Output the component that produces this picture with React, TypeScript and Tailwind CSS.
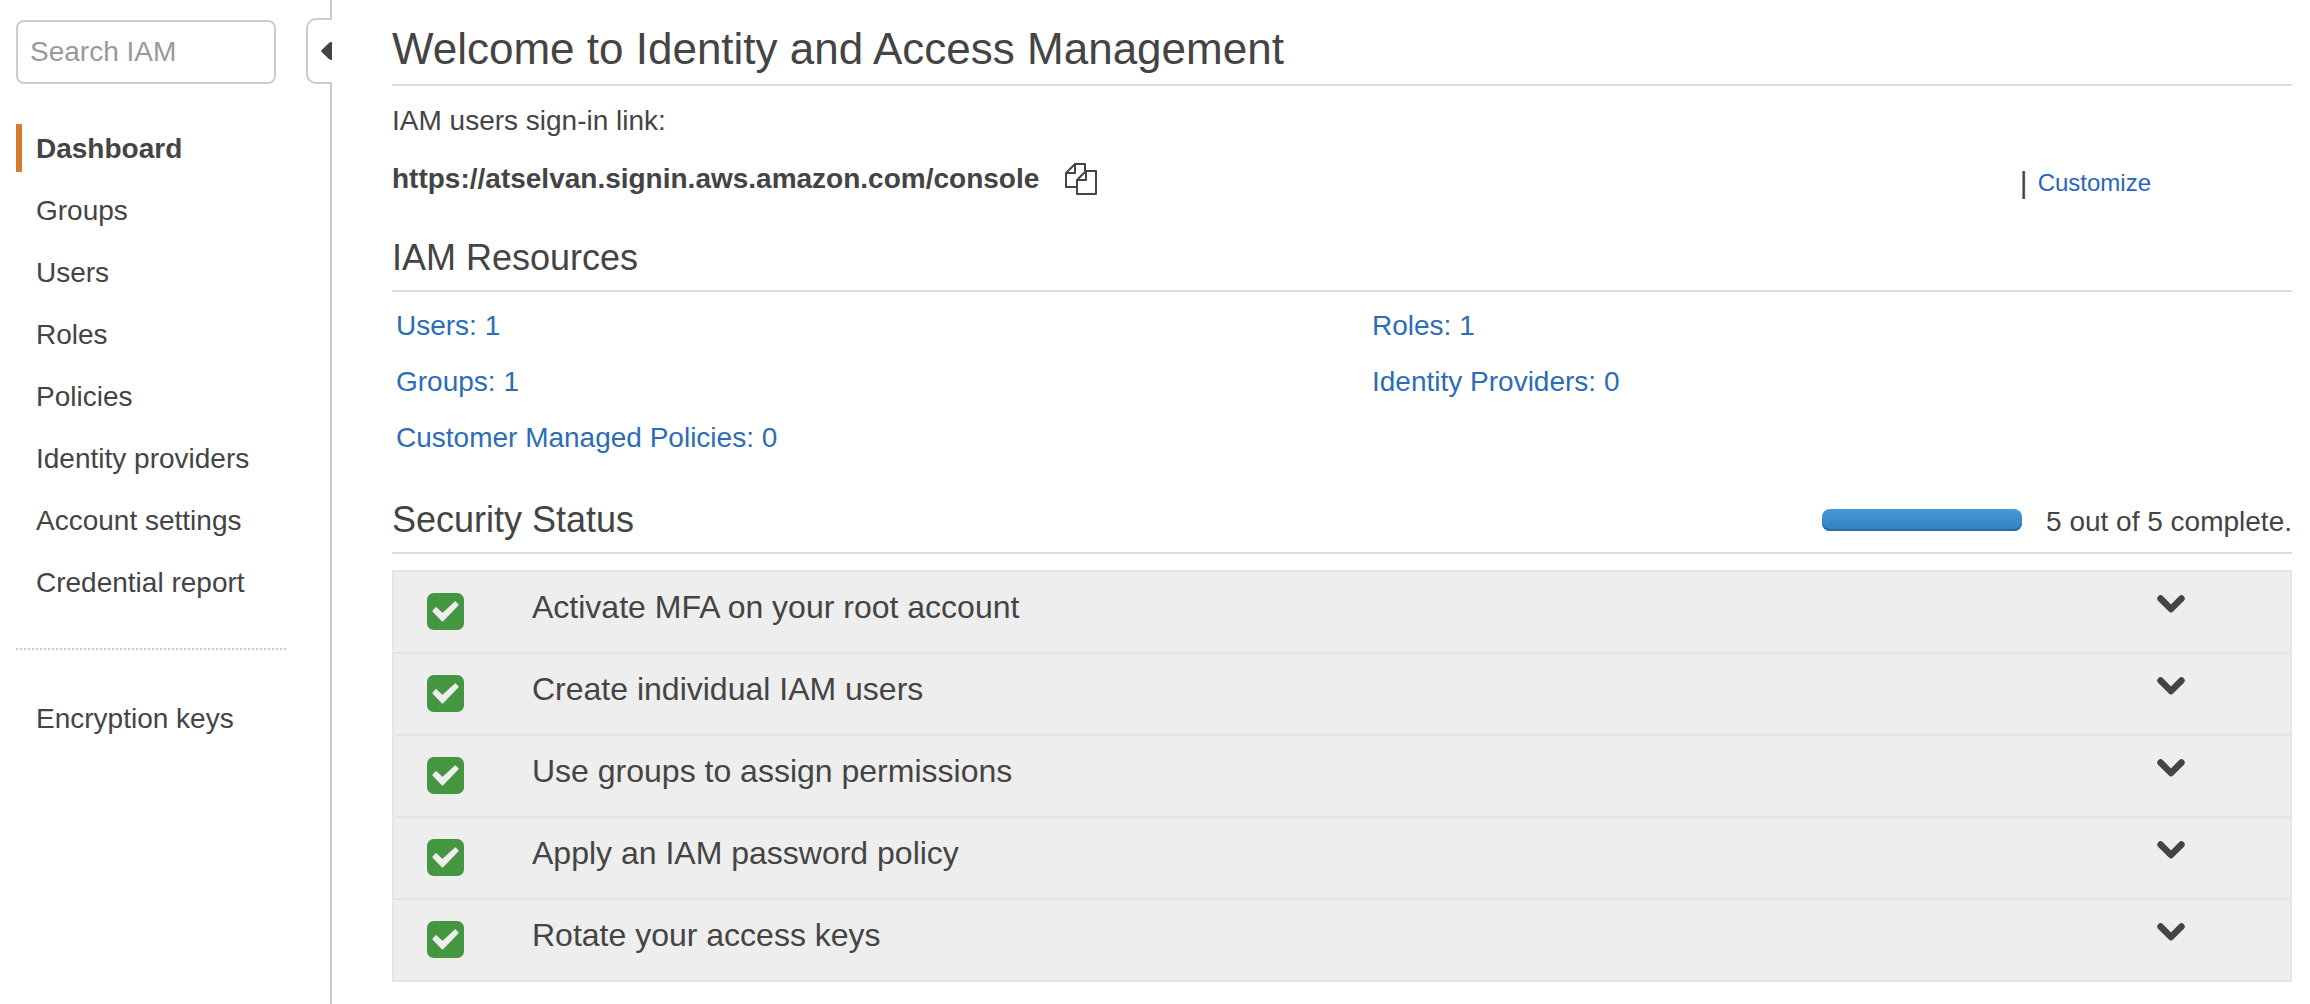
import React from "react";

const navItems = [
  "Dashboard",
  "Groups",
  "Users",
  "Roles",
  "Policies",
  "Identity providers",
  "Account settings",
  "Credential report",
];

const resources = ["Users: 1", "Roles: 1", "Groups: 1", "Identity Providers: 0", "Customer Managed Policies: 0"];

const checks = [
  "Activate MFA on your root account",
  "Create individual IAM users",
  "Use groups to assign permissions",
  "Apply an IAM password policy",
  "Rotate your access keys",
];

function CopyIcon() {
  return (
    <svg className="size-8" viewBox="0 0 32 32" fill="none" stroke="currentColor" strokeWidth="2" strokeLinejoin="round" aria-hidden="true">
      <path d="M12 24H1V10L10 1H20V8" />
      <path d="M1 10H10V1" />
      <path d="M12 17L21 8H31V31H12Z" />
      <path d="M12 17H21V8" />
    </svg>
  );
}

function CheckIcon() {
  return (
    <svg className="h-[37px] w-[37px] shrink-0" viewBox="0 0 110 110" aria-hidden="true">
      <rect width="110" height="110" rx="20" fill="#449641" />
      <path d="M19 54L27 45L46 63L84 28L91 35L46 82Z" fill="#eee" stroke="#eee" strokeWidth="6" strokeLinejoin="round" />
    </svg>
  );
}

function ChevronIcon() {
  return (
    <svg className="h-[18px] w-7" viewBox="0 0 28 18" fill="none" stroke="currentColor" strokeWidth="6.6" strokeLinecap="round" strokeLinejoin="round" aria-hidden="true">
      <path d="M3.6 3.6L14 14L24.4 3.6" />
    </svg>
  );
}

function NavLink({ label, active }: { label: string; active?: boolean }) {
  return (
    <a
      href="#"
      aria-current={active ? "page" : undefined}
      className={
        active
          ? "block border-l-6 border-[#d27b2f] pt-0.5 pl-3.5 leading-[46px] font-bold"
          : "block border-l-6 border-transparent pt-0.5 pl-3.5 leading-[46px]"
      }
    >
      {label}
    </a>
  );
}

export default function App() {
  return (
    <div className="flex min-h-screen bg-white font-['Liberation_Sans',Arial,sans-serif] text-[28px] leading-10 text-[#444]">
      <aside className="w-[306px] shrink-0 pt-5 pl-4">
        <input
          type="search"
          aria-label="Search IAM"
          placeholder="Search IAM"
          className="block h-16 w-[260px] rounded-lg border-2 border-[#ccc] bg-white px-3 placeholder:text-[#999]"
        />
        <nav className="mt-10 mr-5" aria-label="IAM">
          <ul className="flex flex-col gap-3.5">
            {navItems.map((item, i) => (
              <li key={item}>
                <NavLink label={item} active={i === 0} />
              </li>
            ))}
          </ul>
          <hr className="mt-[42px] mb-11 border-t-2 border-dotted border-[#ccc]" />
          <NavLink label="Encryption keys" />
        </nav>
      </aside>

      <div className="flex w-[26px] shrink-0 flex-col">
        <div className="h-[18px] border-r-2 border-[#ccc]" />
        <button
          type="button"
          aria-label="Collapse navigation"
          className="flex h-[66px] items-center justify-end rounded-l-[10px] border-2 border-r-0 border-[#ccc]"
        >
          <svg className="h-[18px] w-[11px]" viewBox="0 0 11 18" fill="currentColor" aria-hidden="true">
            <path d="M0.4 9.8Q-0.2 9 0.4 8.2L8.2 0.8Q9 0 11 0V18Q9 18 8.2 17.2Z" />
          </svg>
        </button>
        <div className="flex-1 border-r-2 border-[#ccc]" />
      </div>

      <main className="min-w-0 flex-1 pt-5 pr-[18px] pl-[60px]">
        <h1 className="border-b-2 border-[#ddd] pb-1.5 text-[44px] leading-[58px]">
          Welcome to Identity and Access Management
        </h1>
        <p className="mt-[15px]">IAM users sign-in link:</p>
        <div className="mt-[18px] flex h-10 items-center">
          <span className="font-bold">https://atselvan.signin.aws.amazon.com/console</span>
          <button type="button" aria-label="Copy sign-in link" className="ml-[26px]">
            <CopyIcon />
          </button>
          <div className="mt-2 mr-[141px] ml-auto flex items-center gap-2.5 text-2xl">
            <span className="text-[30px] leading-8">|</span>
            <a href="#" className="text-[#2965bb]">
              Customize
            </a>
          </div>
        </div>

        <h2 className="mt-[37px] border-b-2 border-[#ddd] pb-2.5 text-4xl leading-11">IAM Resources</h2>
        <ul className="mt-3.5 grid grid-cols-[976fr_920fr] gap-y-4 pl-1">
          {resources.map((item) => (
            <li key={item}>
              <a href="#" className="text-[#2d6db5]">
                {item}
              </a>
            </li>
          ))}
        </ul>

        <div className="mt-10 flex items-center justify-between border-b-2 border-[#ddd] pb-2.5">
          <h2 className="text-4xl leading-11">Security Status</h2>
          <div className="flex items-center gap-6">
            <div
              role="progressbar"
              aria-label="Security status"
              aria-valuenow={5}
              aria-valuemin={0}
              aria-valuemax={5}
              className="h-[22px] w-[200px] rounded-lg bg-linear-to-b from-[#469adb] to-[#337fbd] shadow-[inset_0_-2px_0_#2a6ba2]"
            />
            <span className="pt-1">5 out of 5 complete.</span>
          </div>
        </div>

        <ul className="mt-4 divide-y-2 divide-[#e4e4e4] border-2 border-[#e4e4e4] bg-[#eee]">
          {checks.map((item) => (
            <li key={item}>
              <button type="button" aria-expanded="false" className="flex h-20 w-full items-start pr-[105px] pl-[33px] text-left">
                <span className="pt-[21px]">
                  <CheckIcon />
                </span>
                <span className="flex-1 pt-4 pl-[68px] text-[32px] leading-[38px]">{item}</span>
                <span className="pt-[23px]">
                  <ChevronIcon />
                </span>
              </button>
            </li>
          ))}
        </ul>
      </main>
    </div>
  );
}
